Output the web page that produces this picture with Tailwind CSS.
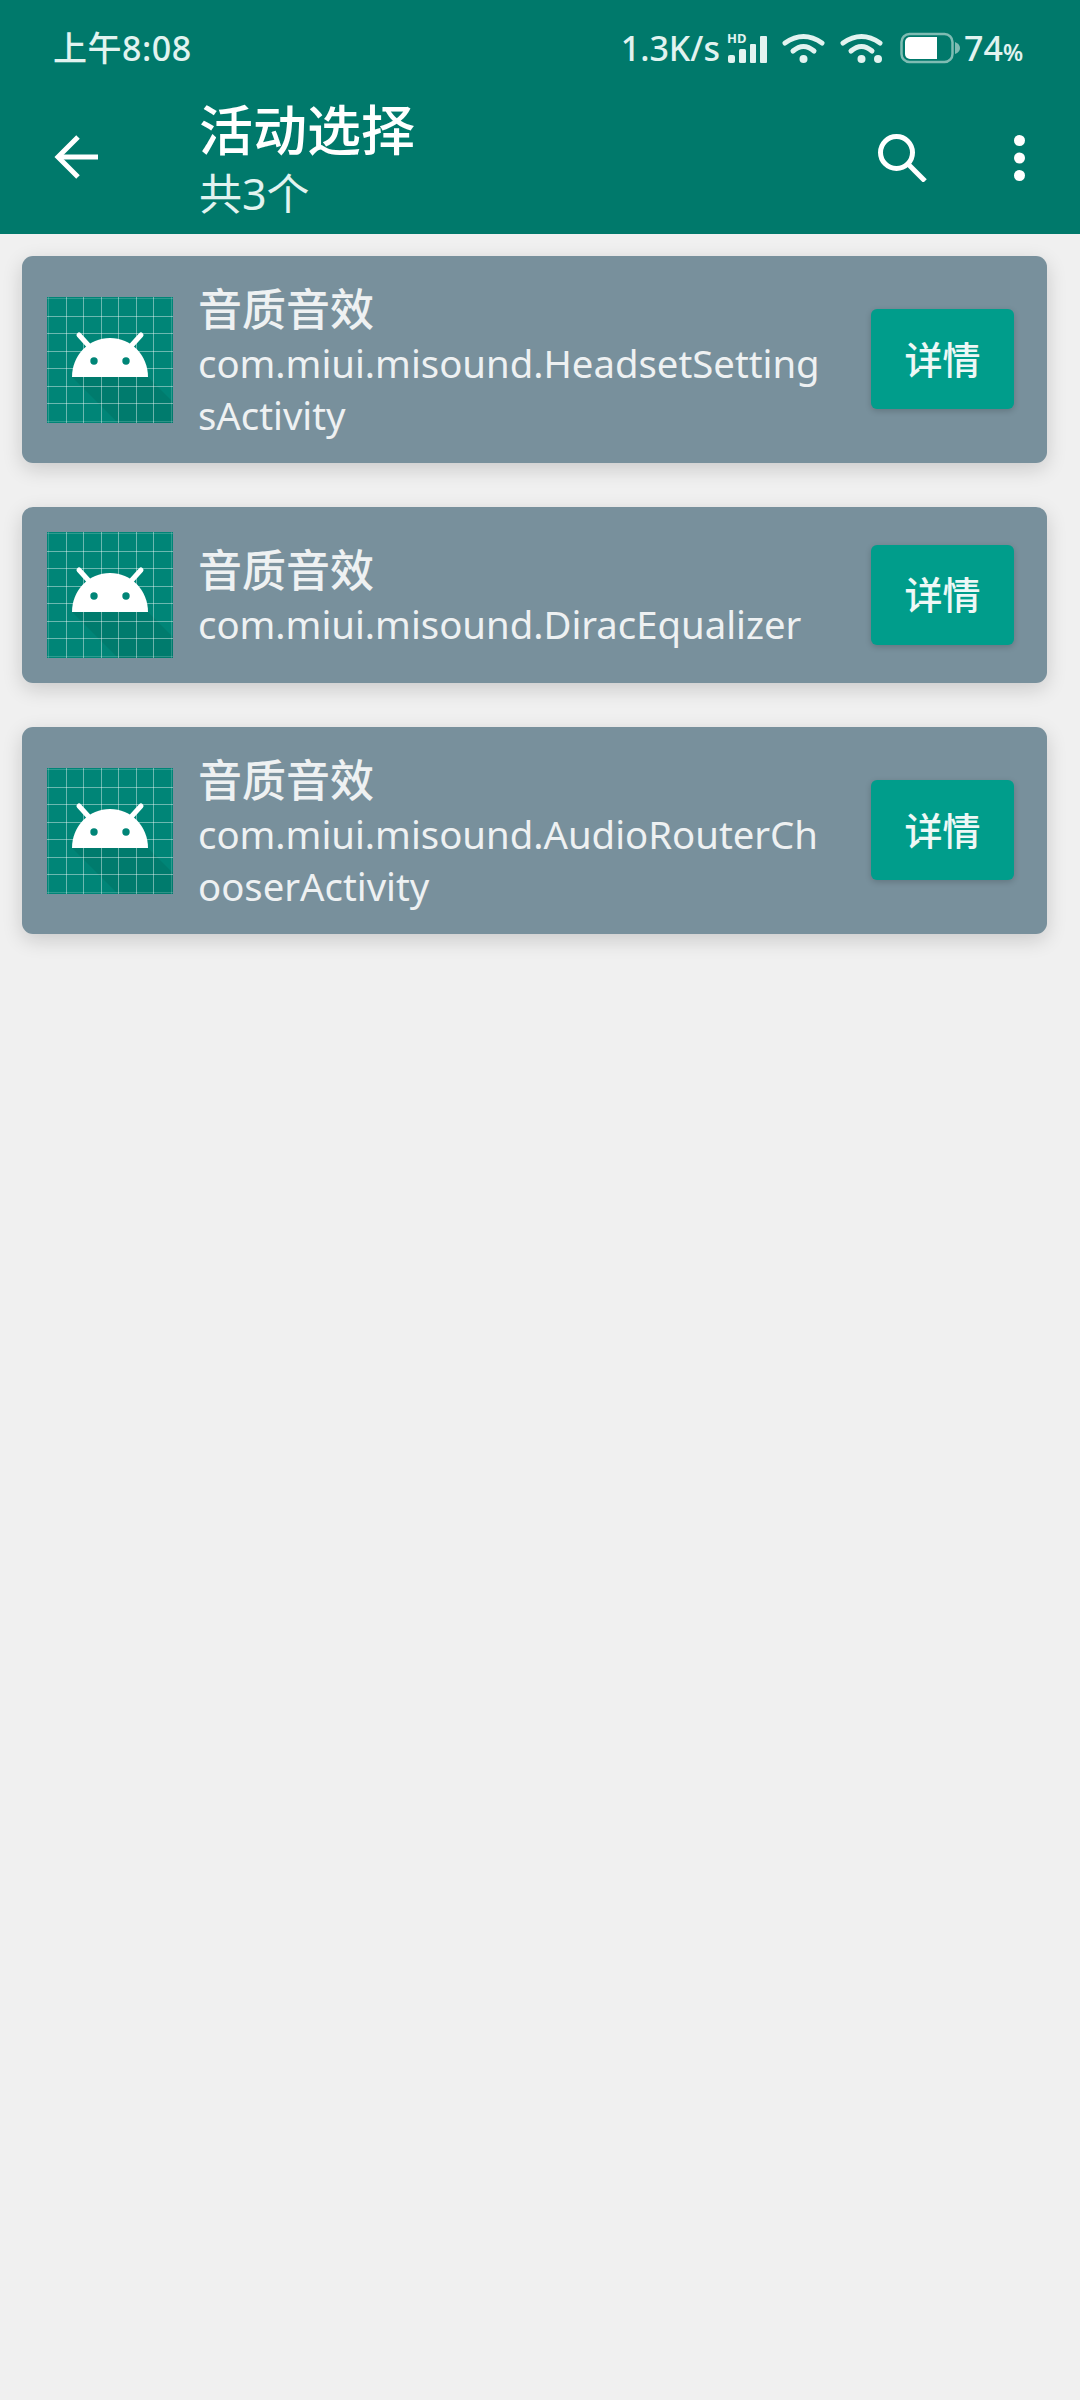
<!DOCTYPE html>
<html lang="zh-CN">
<head>
<meta charset="utf-8">
<script src="https://cdn.jsdelivr.net/npm/@tailwindcss/browser@4"></script>
</head>
<body class="m-0 bg-[#f0f0f0] font-['Noto_Sans','Noto_Sans_CJK_SC',sans-serif]">
<div class="w-[1080px] h-[2400px] bg-[#f0f0f0] overflow-hidden">
  <header class="h-[234px] bg-[#00796b] text-white flex flex-col">
    <div class="h-[96px] flex items-center justify-between pl-[53px] pr-[57px] text-[#e2f3f0] text-[34px] font-medium">
      <span class="leading-none tracking-[0.5px]">上午8:08</span>
      <div class="flex items-center h-[30px]">
        <span class="leading-none mr-[7px]">1.3K/s</span>
        <svg class="w-[40px] h-[32px] mr-[15px] overflow-visible" viewBox="0 0 40 32" fill="#e2f3f0">
          <text x="0" y="11" font-size="13" font-weight="700" font-family="Noto Sans">HD</text>
          <rect x="1" y="23" width="7" height="8" rx="2"/><rect x="12" y="17" width="7" height="14" rx="1.5"/><rect x="23" y="12" width="6" height="19" rx="1"/><rect x="33" y="4" width="7" height="27" rx="1"/>
        </svg>
        <svg class="w-[43px] h-[32px] mr-[15px]" viewBox="0 0 43 32" fill="none" stroke="#e2f3f0" stroke-width="5" stroke-linecap="round">
          <path d="M3 11Q21.500 -2 40 11"/><path d="M11 19Q21.500 10 32 19"/><circle cx="21.500" cy="27" r="4" fill="#e2f3f0" stroke="none"/>
        </svg>
        <svg class="w-[43px] h-[32px] mr-[17px]" viewBox="0 0 43 32" fill="none" stroke="#e2f3f0" stroke-width="5" stroke-linecap="round">
          <path d="M3 11Q21.500 -2 40 11"/><path d="M11 19Q21.500 10 32 19"/><circle cx="21.500" cy="27" r="4" fill="#e2f3f0" stroke="none"/><circle cx="38" cy="27" r="4" fill="#e2f3f0" stroke="none"/>
        </svg>
        <svg class="w-[60px] h-[32px] mr-[4px]" viewBox="0 0 60 32">
          <rect x="1.5" y="2" width="51" height="28" rx="8" fill="none" stroke="#7fbcb3" stroke-width="2.5"/>
          <path d="M10 5H37V27H10A5 5 0 0 1 5 22V10A5 5 0 0 1 10 5Z" fill="#fff"/>
          <path d="M55 10Q60 12 60 16Q60 20 55 22Z" fill="#7fbcb3"/>
        </svg>
        <span class="leading-none font-medium">74<span class="text-[23px] font-semibold">%</span></span>
      </div>
    </div>
    <div class="flex-1 flex items-center pl-[53px] pr-[55px] pb-[3px]">
      <svg class="w-[48px] h-[48px] mr-[98px] -mt-[14px]" viewBox="0 0 48 48" fill="none" stroke="#fff" stroke-width="5">
        <path d="M45 24H6"/><path d="M25 4L5 24L25 44"/>
      </svg>
      <div class="flex-1 flex flex-col">
        <span class="text-[54px] leading-[60px] font-medium">活动选择</span>
        <span class="text-[43px] leading-[68px] text-[#e2f3f0]">共3个</span>
      </div>
      <svg class="w-[49px] h-[48px] mr-[87px] -mt-[12px]" viewBox="0 0 49 48" fill="none" stroke="#fff" stroke-width="5">
        <circle cx="18.500" cy="18.500" r="16"/><path d="M30 30L47 47"/>
      </svg>
      <svg class="w-[11px] h-[46px] -mt-[12px]" viewBox="0 0 11 46" fill="#fff">
        <circle cx="5.5" cy="5.5" r="5.5"/><circle cx="5.5" cy="23" r="5.5"/><circle cx="5.5" cy="40.5" r="5.5"/>
      </svg>
    </div>
  </header>

  <main class="flex flex-col gap-[44px] pt-[22px] pl-[22px] pr-[33px]">
    <section class="h-[207px] rounded-[11px] bg-[#78909c] shadow-[0_6px_20px_rgba(0,0,0,0.16)] flex items-center pl-[25px] pr-[33px] text-[#eef1f2]">
      <svg class="w-[126px] h-[126px] shrink-0 mr-[25px]" viewBox="0 0 126 126">
        <rect width="126" height="126" fill="#008577"/>
        <path d="M25 80H101L126 105V126H71Z" fill="#00695c" fill-opacity=".35"/>
        <path d="M19.500 0V126M36.500 0V126M54.500 0V126M71.500 0V126M89.500 0V126M106.500 0V126M0 19.500H126M0 36.500H126M0 54.500H126M0 71.500H126M0 89.500H126M0 106.500H126" stroke="#fff" stroke-opacity=".42" stroke-width="1" fill="none"/>
        <path d="M1.500 0V126M124.500 0V126M0 1.500H126M0 124.500H126" stroke="#fff" stroke-opacity=".18" stroke-width="1" fill="none"/>
        <path d="M25 80C25 58 42 41 63 41C84 41 101 58 101 80Z" fill="#fff"/>
        <path d="M32 38L42 49M94 38L84 49" stroke="#fff" stroke-width="5" stroke-linecap="round"/>
        <circle cx="47" cy="64" r="3.7" fill="#008577"/><circle cx="79" cy="64" r="3.7" fill="#008577"/>
      </svg>
      <div class="w-[630px] shrink-0 break-all pt-[2px]">
        <p class="text-[44px] leading-[56px] font-medium">音质音效</p>
        <p class="text-[38.3px] leading-[52px]">com.miui.misound.HeadsetSettingsActivity</p>
      </div>
      <button class="ml-[43px] w-[143px] h-[100px] -mt-[1px] rounded-[6px] bg-[#009d8b] shadow-[0_2px_6px_rgba(0,0,0,0.18)] text-[38px] font-medium text-[#eef8f6] flex items-center justify-center shrink-0">详情</button>
    </section>

    <section class="h-[176px] rounded-[11px] bg-[#78909c] shadow-[0_6px_20px_rgba(0,0,0,0.16)] flex items-center pl-[25px] pr-[33px] text-[#eef1f2]">
      <svg class="w-[126px] h-[126px] shrink-0 mr-[25px]" viewBox="0 0 126 126">
        <rect width="126" height="126" fill="#008577"/>
        <path d="M25 80H101L126 105V126H71Z" fill="#00695c" fill-opacity=".35"/>
        <path d="M19.500 0V126M36.500 0V126M54.500 0V126M71.500 0V126M89.500 0V126M106.500 0V126M0 19.500H126M0 36.500H126M0 54.500H126M0 71.500H126M0 89.500H126M0 106.500H126" stroke="#fff" stroke-opacity=".42" stroke-width="1" fill="none"/>
        <path d="M1.500 0V126M124.500 0V126M0 1.500H126M0 124.500H126" stroke="#fff" stroke-opacity=".18" stroke-width="1" fill="none"/>
        <path d="M25 80C25 58 42 41 63 41C84 41 101 58 101 80Z" fill="#fff"/>
        <path d="M32 38L42 49M94 38L84 49" stroke="#fff" stroke-width="5" stroke-linecap="round"/>
        <circle cx="47" cy="64" r="3.7" fill="#008577"/><circle cx="79" cy="64" r="3.7" fill="#008577"/>
      </svg>
      <div class="w-[630px] shrink-0 break-all pt-[2px]">
        <p class="text-[44px] leading-[56px] font-medium">音质音效</p>
        <p class="text-[38.3px] leading-[52px]">com.miui.misound.DiracEqualizer</p>
      </div>
      <button class="ml-[43px] w-[143px] h-[100px] -mt-[1px] rounded-[6px] bg-[#009d8b] shadow-[0_2px_6px_rgba(0,0,0,0.18)] text-[38px] font-medium text-[#eef8f6] flex items-center justify-center shrink-0">详情</button>
    </section>

    <section class="h-[207px] rounded-[11px] bg-[#78909c] shadow-[0_6px_20px_rgba(0,0,0,0.16)] flex items-center pl-[25px] pr-[33px] text-[#eef1f2]">
      <svg class="w-[126px] h-[126px] shrink-0 mr-[25px]" viewBox="0 0 126 126">
        <rect width="126" height="126" fill="#008577"/>
        <path d="M25 80H101L126 105V126H71Z" fill="#00695c" fill-opacity=".35"/>
        <path d="M19.500 0V126M36.500 0V126M54.500 0V126M71.500 0V126M89.500 0V126M106.500 0V126M0 19.500H126M0 36.500H126M0 54.500H126M0 71.500H126M0 89.500H126M0 106.500H126" stroke="#fff" stroke-opacity=".42" stroke-width="1" fill="none"/>
        <path d="M1.500 0V126M124.500 0V126M0 1.500H126M0 124.500H126" stroke="#fff" stroke-opacity=".18" stroke-width="1" fill="none"/>
        <path d="M25 80C25 58 42 41 63 41C84 41 101 58 101 80Z" fill="#fff"/>
        <path d="M32 38L42 49M94 38L84 49" stroke="#fff" stroke-width="5" stroke-linecap="round"/>
        <circle cx="47" cy="64" r="3.7" fill="#008577"/><circle cx="79" cy="64" r="3.7" fill="#008577"/>
      </svg>
      <div class="w-[630px] shrink-0 break-all pt-[2px]">
        <p class="text-[44px] leading-[56px] font-medium">音质音效</p>
        <p class="text-[38.3px] leading-[52px]">com.miui.misound.AudioRouterChooserActivity</p>
      </div>
      <button class="ml-[43px] w-[143px] h-[100px] -mt-[1px] rounded-[6px] bg-[#009d8b] shadow-[0_2px_6px_rgba(0,0,0,0.18)] text-[38px] font-medium text-[#eef8f6] flex items-center justify-center shrink-0">详情</button>
    </section>
  </main>
</div>
</body>
</html>
